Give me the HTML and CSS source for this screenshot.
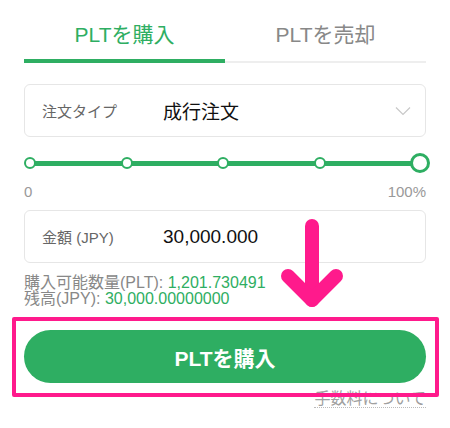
FILE: index.html
```html
<!DOCTYPE html>
<html lang="ja">
<head>
  <meta charset="utf-8">
  <meta name="viewport" content="width=device-width,initial-scale=1">
  <title>PLTを購入</title>
  <link rel="stylesheet" href="styles.css">
</head>
<body>
  <div class="panel">
    <div class="tabs">
      <div class="tab active">PLTを購入</div>
      <div class="tab">PLTを売却</div>
    </div>

    <div class="field">
      <span class="field-label">注文タイプ</span>
      <span class="field-value">成行注文</span>
      <svg class="chevron" width="16" height="10" viewBox="0 0 16 10">
        <path d="M1 1.5 L8 8.5 L15 1.5" fill="none" stroke="#c8c8c8" stroke-width="1.2"/>
      </svg>
    </div>

    <div class="slider">
      <span class="dot"></span>
      <span class="dot"></span>
      <span class="dot"></span>
      <span class="dot"></span>
      <span class="dot big"></span>
    </div>
    <div class="scale">
      <span>0</span>
      <span>100%</span>
    </div>

    <div class="field amount">
      <span class="field-label">金額 (JPY)</span>
      <span class="field-value">30,000.000</span>
    </div>

    <div class="info">
      <div>購入可能数量(PLT): <span class="num">1,201.730491</span></div>
      <div>残高(JPY): <span class="num">30,000.00000000</span></div>
    </div>

    <button class="buy">PLTを購入</button>
    <div class="fee"><a href="#">手数料について</a></div>
  </div>

  <!-- annotation -->
  <div class="mark-frame"></div>
  <svg class="mark-arrow" width="70" height="96" viewBox="0 0 70 96">
    <g fill="none" stroke="#ff1a8c" stroke-width="14" stroke-linecap="round" stroke-linejoin="round">
      <path d="M32 10 L32 84"/>
      <path d="M8 60 L32 84 L56 60"/>
    </g>
  </svg>
</body>
</html>
```

FILE: styles.css
```css
body { margin: 0; font-family: "Liberation Sans", "Noto Sans CJK JP", sans-serif; color: #222; background: #fff; }
.panel { padding: 0 24px; width: 402px; }

.tabs { display: flex; align-items: flex-end; }
.tab { flex: 1; text-align: center; font-size: 21px; line-height: 24px; padding: 23px 0 12px; color: #888; border-bottom: 2px solid #eeeeee; padding-bottom: 14px; }
.tab.active { color: #2eae62; border-bottom: 4px solid #2eae62; padding-bottom: 12px; }

.field { display: flex; align-items: center; height: 51px; border: 1px solid #e6e6e6; border-radius: 6px; padding-left: 17px; margin-top: 21px; }
.field-label { width: 121px; font-size: 15px; color: #666; }
.field-value { flex: 1; font-size: 19px; color: #111; }
.chevron { margin-right: 14px; }
.amount { margin-top: 9px; }

.slider { display: flex; justify-content: space-between; align-items: center; height: 20px; width: 406px; margin-top: 16px;
  background: linear-gradient(#2eae62, #2eae62) center / calc(100% - 16px) 5px no-repeat; }
.dot { width: 8px; height: 8px; border: 2px solid #2eae62; border-radius: 50%; background: #fff; }
.dot.big { width: 14px; height: 14px; border-width: 3px; }

.scale { display: flex; justify-content: space-between; font-size: 15px; line-height: 18px; color: #999; margin-top: 10px; }

.info { font-size: 16px; line-height: 16px; color: #888; margin-top: 12px; }
.info .num { color: #2eae62; }

.buy { display: block; width: 100%; height: 53px; margin-top: 23px; border: 0; border-radius: 27px; background: #2eae62; color: #fff; font: bold 21px "Liberation Sans", "Noto Sans CJK JP", sans-serif; cursor: pointer; }
.fee { text-align: right; margin-top: 6px; font-size: 16px; line-height: 20px; }
.fee a { color: #a0a0a0; text-decoration: none; border-bottom: 1px dotted #bbb; }

.mark-frame { position: absolute; left: 12px; top: 317px; width: 419px; height: 72px; border: 4px solid #ff1a8c; border-radius: 2px; }
.mark-arrow { position: absolute; left: 280px; top: 216px; }
```
